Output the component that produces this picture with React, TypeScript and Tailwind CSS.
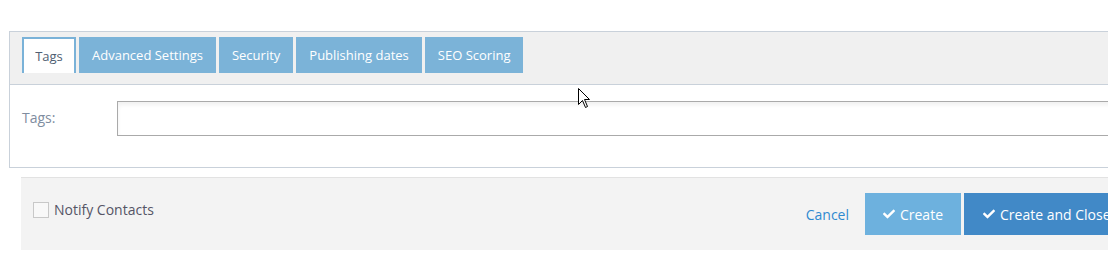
import { FaCheck } from "react-icons/fa";

const tabs = ["Advanced Settings", "Security", "Publishing dates", "SEO Scoring"];

export default function App() {
  return (
    <div
      className="relative h-[257px] w-[1108px] overflow-hidden bg-white text-[13px]"
      style={{ fontFamily: '"Open Sans", "Liberation Sans", sans-serif' }}
    >
      <div className="ml-[9px] mt-[31px] w-[1130px] border border-[#c9d1da]">
        <div className="flex h-[53px] gap-[3px] border-b border-[#c9d1da] bg-[#f0f0f0] pl-[12px] pt-[5px]">
          <div className="flex h-[36px] w-[54px] items-center justify-center border-x-2 border-t-2 border-[#7ab2d8] bg-white pt-[2px] text-[#4f5e72]">
            Tags
          </div>
          {tabs.map((t) => (
            <div
              key={t}
              className="flex h-[36px] items-center bg-[#7bb3d8] px-[13px] pt-[2px] text-white"
            >
              {t}
            </div>
          ))}
        </div>
        <div className="flex h-[82px] items-start pl-[12px] pt-[16px]">
          <label className="w-[95px] pt-[6px] text-[14px] text-[#7f8da0]">Tags:</label>
          <input
            type="text"
            className="h-[35px] flex-1 border border-[#aaaaaa] bg-white shadow-[inset_0_3px_4px_rgba(0,0,0,0.06)] outline-none"
          />
        </div>
      </div>

      <div className="ml-[21px] mt-[9px] flex h-[73px] w-[1120px] items-start border-t border-[#e2e2e2] bg-[#f3f3f3]">
        <label className="ml-[12px] mt-[21px] flex items-center gap-[5px] text-[14px] text-[#555566]">
          <span className="h-[16px] w-[16px] border border-[#c8c8c8] bg-[#f8f8f8]" />
          Notify Contacts
        </label>
        <div className="ml-auto mt-[15px] flex items-center">
          <span className="mr-[16px] text-[14px] text-[#2f8ad0]">Cancel</span>
          <button className="flex h-[42px] w-[96px] items-center justify-center gap-[5px] bg-[#6db1de] text-[14px] text-white">
            <FaCheck size={12} />
            Create
          </button>
          <button className="ml-[3px] flex h-[42px] w-[177px] items-center gap-[5px] bg-[#4189c7] pl-[19px] text-[14px] text-white">
            <FaCheck size={12} />
            Create and Close
          </button>
        </div>
      </div>

      <svg
        className="absolute left-[578px] top-[88px]"
        width="13"
        height="21"
        viewBox="0 0 13 21"
      >
        <path
          d="M0.5 0.5 L0.5 16.5 L4.5 12.5 L7.5 19.5 L9.5 18.5 L6.5 11.5 L11.5 11.5 Z"
          fill="white"
          stroke="black"
          strokeWidth="1"
        />
      </svg>
    </div>
  );
}
